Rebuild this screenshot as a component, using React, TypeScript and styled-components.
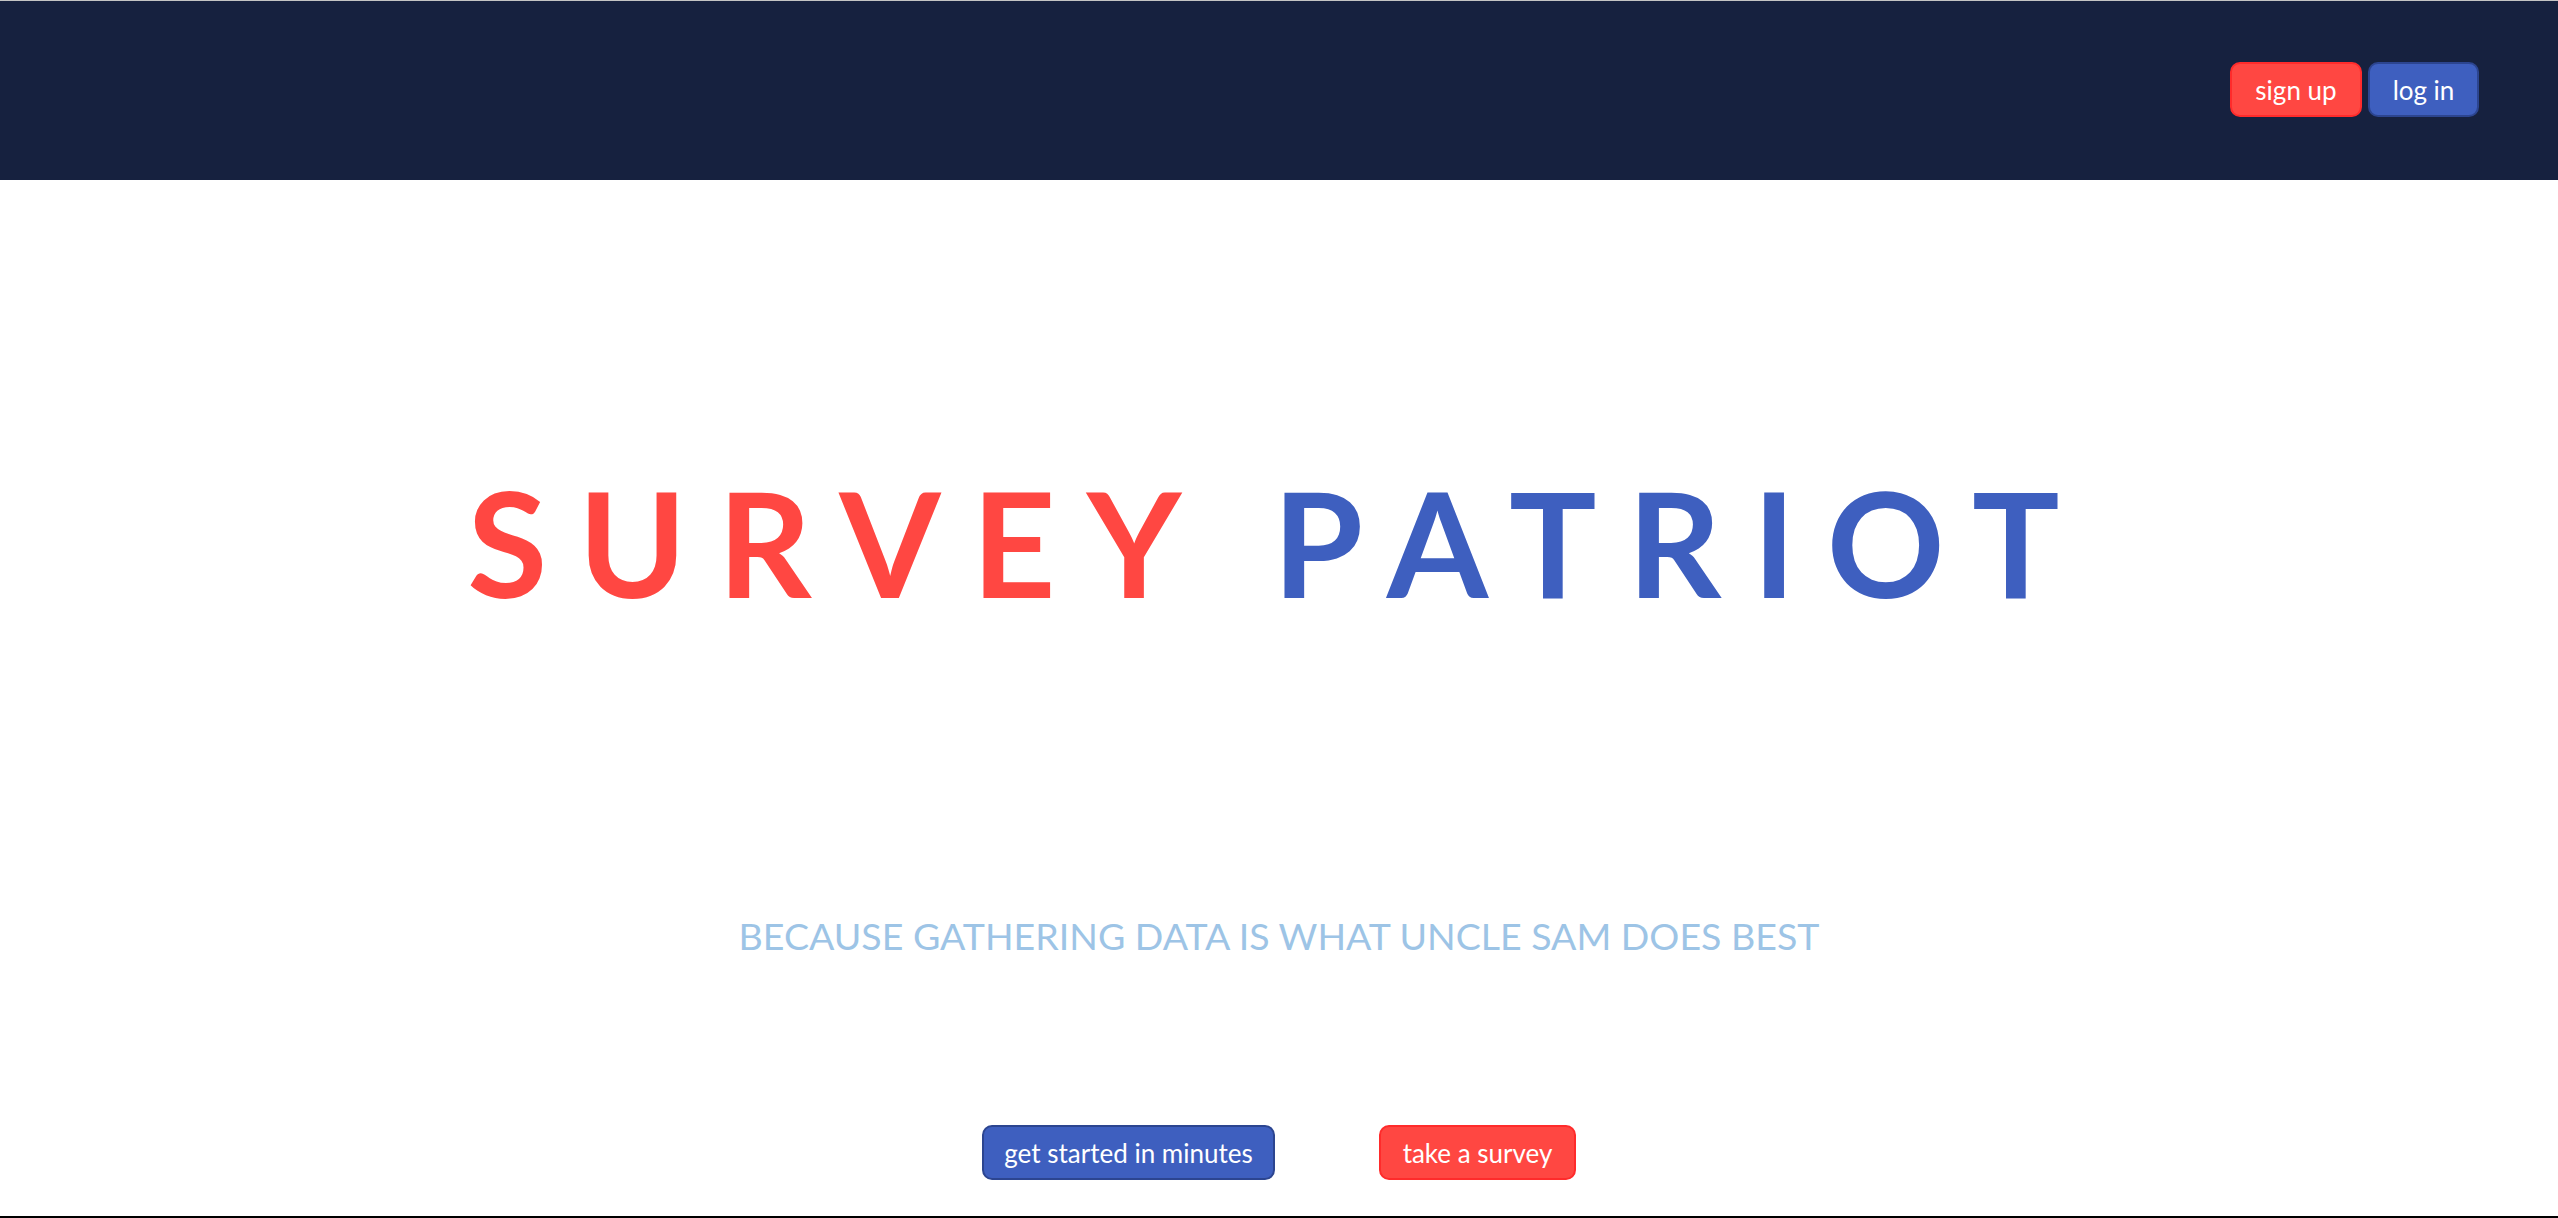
import React from "react";
import styled, { createGlobalStyle } from "styled-components";

const GlobalStyle = createGlobalStyle`
  html, body {
    margin: 0;
    padding: 0;
    background: #ffffff;
  }
  body {
    font-family: Lato, "Open Sans", "Liberation Sans", sans-serif;
  }
  * { box-sizing: border-box; }
`;

const Page = styled.div`
  display: flex;
  flex-direction: column;
  min-height: 1218px;
  border-top: 1px solid #c4c4c4;
  border-bottom: 2px solid #000000;
`;

const Header = styled.header`
  height: 179px;
  background: #16213f;
  display: flex;
  justify-content: flex-end;
  align-items: flex-start;
  padding: 61px 79px 0 0;
  gap: 6px;
`;

const Button = styled.button<{ $variant: "red" | "blue"; $w: number }>`
  width: ${(p) => p.$w}px;
  height: 55px;
  border-radius: 10px;
  border: 2px solid ${(p) => (p.$variant === "red" ? "#ff2b2b" : "#2c4590")};
  background: ${(p) => (p.$variant === "red" ? "#ff4742" : "#3e5fbf")};
  color: #ffffff;
  font-family: Lato, "Open Sans", sans-serif;
  font-size: 26px;
  font-weight: 400;
  padding: 0;
  cursor: pointer;
`;

const Main = styled.main`
  flex: 1;
  display: flex;
  flex-direction: column;
  align-items: center;
`;

const Title = styled.h1`
  margin: 272px 0 0 0;
  font-family: Lato, "Open Sans", sans-serif;
  font-weight: 700;
  font-size: 146px;
  line-height: 180px;
  letter-spacing: 31px;
  white-space: nowrap;
`;

const Word = styled.span<{ $color: string }>`
  color: ${(p) => p.$color};
`;

const Subtitle = styled.p`
  margin: 280px 0 0 0;
  font-family: Lato, "Open Sans", sans-serif;
  font-weight: 400;
  font-size: 37.5px;
  line-height: 48px;
  color: #9dc4e6;
  text-transform: uppercase;
  white-space: nowrap;
`;

const Actions = styled.div`
  margin-top: 165px;
  display: flex;
  gap: 104px;
`;

export default function App() {
  return (
    <>
      <GlobalStyle />
      <Page>
        <Header>
          <Button $variant="red" $w={132}>sign up</Button>
          <Button $variant="blue" $w={111}>log in</Button>
        </Header>
        <Main>
          <Title>
            <Word $color="#ff4742">SURVEY</Word>{" "}
            <Word $color="#3e5fbf">PATRIOT</Word>
          </Title>
          <Subtitle>Because gathering data is what Uncle Sam does best</Subtitle>
          <Actions>
            <Button $variant="blue" $w={293}>get started in minutes</Button>
            <Button $variant="red" $w={197}>take a survey</Button>
          </Actions>
        </Main>
      </Page>
    </>
  );
}
